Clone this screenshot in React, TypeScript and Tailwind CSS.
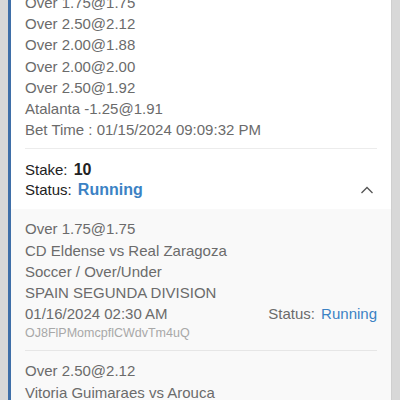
import React from "react";

const font = { fontFamily: '"Liberation Sans", Arial, sans-serif' };

export default function App() {
  const legs = [
    "Over 1.75@1.75",
    "Over 2.50@2.12",
    "Over 2.00@1.88",
    "Over 2.00@2.00",
    "Over 2.50@1.92",
    "Atalanta -1.25@1.91",
  ];
  return (
    <div className="w-[400px] h-[400px] overflow-hidden bg-[#d8d8d8] flex" style={font}>
      <div className="w-[8px] shrink-0" />
      <div className="w-[383px] shrink-0 border-l-[3px] border-[#3f6fa8] bg-white flex flex-col mt-[-8px]">
        <div className="px-[14px] text-[15px] leading-[21.2px] text-[#6b6b6b]">
          {legs.map((l) => (
            <div key={l}>{l}</div>
          ))}
          <div>Bet Time : 01/15/2024 09:09:32 PM</div>
        </div>
        <div className="mx-[14px] mt-[8px] border-t border-[#ececec]" />
        <div className="px-[14px] pt-[11px] pb-[9px] flex items-end justify-between">
          <div className="text-[15px] leading-[20px] text-[#222]">
            <div>
              Stake: <span className="font-bold text-[16px] ml-[2px]">10</span>
            </div>
            <div>
              Status: <span className="font-bold text-[16px] text-[#3b82c4] ml-[2px]">Running</span>
            </div>
          </div>
          <svg width="14" height="10" viewBox="0 0 14 10" className="mb-[5px] mr-[3px]">
            <path d="M1.5 8 L7 2.5 L12.5 8" fill="none" stroke="#555" strokeWidth="1.3" />
          </svg>
        </div>
        <div className="bg-[#f9f9f9] flex-1 px-[14px] pt-[9px]">
          <div className="text-[15px] leading-[21.2px] text-[#6b6b6b]">
            <div>Over 1.75@1.75</div>
            <div>CD Eldense vs Real Zaragoza</div>
            <div>Soccer / Over/Under</div>
            <div>SPAIN SEGUNDA DIVISION</div>
            <div className="flex justify-between">
              <span>01/16/2024 02:30 AM</span>
              <span>
                Status: <span className="text-[#3b82c4] ml-[2px]">Running</span>
              </span>
            </div>
            <div className="text-[12.5px] leading-[18px] text-[#a8a8a8]">OJ8FlPMomcpflCWdvTm4uQ</div>
          </div>
          <div className="mt-[8px] border-t border-[#e6e6e6]" />
          <div className="pt-[9px] text-[15px] leading-[21.2px] text-[#6b6b6b]">
            <div>Over 2.50@2.12</div>
            <div>Vitoria Guimaraes vs Arouca</div>
          </div>
        </div>
      </div>
      <div className="w-[1px] bg-[#cfcfcf]" />
    </div>
  );
}
